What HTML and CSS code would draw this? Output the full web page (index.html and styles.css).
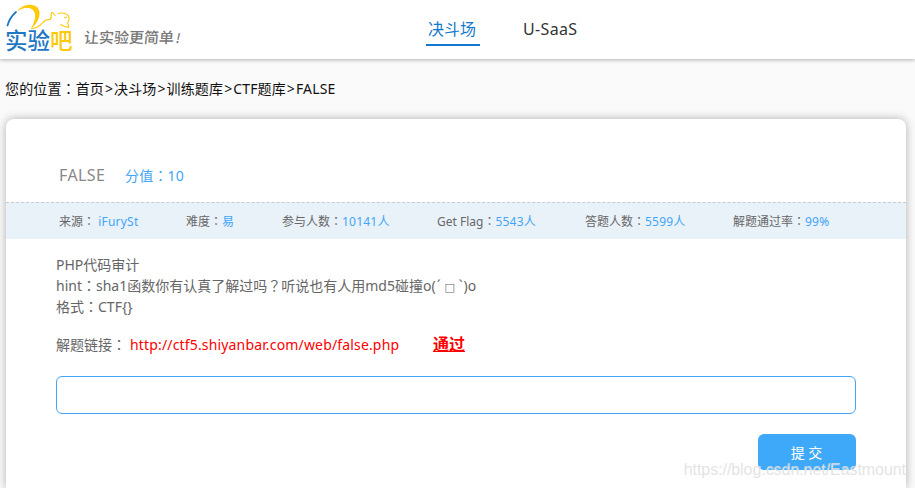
FILE: index.html
```html
<!DOCTYPE html>
<html lang="zh-CN">
<head>
<meta charset="utf-8">
<title>FALSE - 实验吧</title>
<link rel="stylesheet" href="styles.css">
</head>
<body>
<header class="topbar">
  <div class="brand">
    <svg class="arc" viewBox="0 0 72 30" width="72" height="30">
      <path d="M7.500 25.500C9 20 12 15.500 16 12" fill="none" stroke="#1f78c4" stroke-width="1.800" stroke-linecap="round"/>
      <path d="M31 28.500C41 29 42 20 48 19.500C53 20 50 15 52 12" fill="none" stroke="#ffc907" stroke-width="1.200"/>
      <path d="M17 11.500C22 4 33 2.500 38 8C42 14 38 23 31 29C35 21 37 14 33 10C29 6.500 23 7 17 11.500Z" fill="#ffc907"/>
      <path d="M52 12L55.500 16M58 13.500C64 12 70 14 69 20L67.500 23L69 27C65 28 63 25 60 24.500M64 18L67 17" fill="none" stroke="#ffc907" stroke-width="1.100"/>
    </svg>
    <div class="logo-name">实验<b>吧</b></div>
  </div>
  <div class="slogan"><span>让实验更简单</span><span class="bang">!</span></div>
  <nav class="nav">
    <a class="tab active">决斗场</a>
    <a class="tab saas">U-SaaS</a>
  </nav>
</header>
<div class="crumbs">您的位置<i>：</i>首页<s>&gt;</s>决斗场<s>&gt;</s>训练题库<s>&gt;</s>CTF题库<s>&gt;</s>FALSE</div>
<main class="card">
  <div class="heading"><h1>FALSE</h1><span class="score">分值<i>：</i>10</span></div>
  <div class="stats">
    <span>来源<i>：</i> <em>iFurySt</em></span>
    <span>难度<i>：</i><em>易</em></span>
    <span>参与人数<i>：</i><em>10141人</em></span>
    <span>Get Flag<i>：</i><em>5543人</em></span>
    <span>答题人数<i>：</i><em>5599人</em></span>
    <span>解题通过率<i>：</i><em>99%</em></span>
  </div>
  <div class="body">
    <p>PHP代码审计</p>
    <p>hint<i>：</i>sha1函数你有认真了解过吗<i>？</i>听说也有人用md5碰撞o(<span class="arm">ˊ</span><span class="mouth">□</span><span class="arm">ˋ</span>)o</p>
    <p>格式<i>：</i>CTF{}</p>
    <div class="linkrow"><span class="label">解题链接<i>：</i></span><a class="url">http://ctf5.shiyanbar.com/web/false.php</a><a class="pass">通过</a></div>
    <input class="answer" type="text">
    <div class="actions"><button class="submit">提 交</button></div>
  </div>
</main>
<div class="watermark">https://blog.csdn.net/Eastmount</div>
</body>
</html>
```
FILE: styles.css
```css
* { box-sizing: border-box; }
html { overflow: hidden; }
body {
  margin: 0;
  height: 488px;
  overflow: hidden;
  background: #fafafa;
  color: #111;
  font: 14px/21px "Noto Sans", "Noto Sans CJK SC", sans-serif;
}
i { font-style: normal; font-family: "Noto Sans CJK TC", sans-serif; line-height: 1; -webkit-locale: "zh-TW"; }
em { font-style: normal; color: #42a5f5; letter-spacing: .22px; }
s { display: inline-block; padding: 0 1px; text-decoration: none; }
p, h1 { margin: 0; font-weight: 400; }

.topbar {
  display: flex;
  height: 59px;
  background: #fff;
  box-shadow: 0 1px 4px rgba(0, 0, 0, .3);
}
.brand { width: 84px; flex: none; }
.arc { display: block; }
.logo-name {
  margin: -6px 0 0 5px;
  color: #1f78c4;
  font: 500 22.500px/30px "Noto Sans CJK SC", sans-serif;
  white-space: nowrap;
}
.logo-name b { color: #ffc907; font-weight: 500; }
.slogan {
  width: 342px;
  flex: none;
  padding-top: 25px;
  color: #777;
  font: 500 15px/24px "Noto Sans CJK SC", sans-serif;
}
.slogan span { display: inline-block; transform: skewX(-5deg); }
.slogan .bang { margin-left: 2px; font-size: 13px; transform: skewX(-12deg); }
.nav { display: flex; gap: 43px; padding-top: 16px; }
.tab { height: 30px; font-size: 16px; line-height: 26px; color: #333; white-space: nowrap; }
.tab.saas { letter-spacing: .35px; }
.tab.active { width: 54px; padding-left: 2px; color: #1479cb; border-bottom: 2px solid #1479cb; }

.crumbs { padding: 19px 0 0 5px; height: 60px; white-space: nowrap; letter-spacing: .13px; }

.card {
  width: 900px;
  height: 369px;
  margin-left: 6px;
  background: #fff;
  border-radius: 8px 8px 0 0;
  box-shadow: 0 0 10px rgba(0, 0, 0, .3);
  color: #666;
}
.heading { display: flex; height: 83px; padding: 45px 0 0 53px; line-height: 22px; }
.heading h1 { width: 66px; font-size: 16px; line-height: 22px; color: #888; letter-spacing: .4px; }
.score { color: #42a5f5; letter-spacing: .2px; line-height: 24px; }
.stats {
  display: grid;
  grid-template-columns: 127px 96px 155px 148px 148px 1fr;
  height: 37px;
  padding-left: 53px;
  border-top: 1px dashed #c5cbd0;
  background: #eaf2f9;
  font-size: 12px;
  line-height: 38px;
  white-space: nowrap;
}
.body { padding: 15px 50px 0; white-space: nowrap; }
.arm { display: inline-block; width: 6px; text-align: center; font-family: "Noto Sans", sans-serif; }
.mouth { display: inline-block; width: 16px; font-family: "DejaVu Sans", sans-serif; font-size: 11px; line-height: 11px; text-align: center; }
.linkrow { display: flex; height: 59px; padding-top: 17px; }
.label { width: 74px; }
.url { width: 303px; color: #f00; letter-spacing: .16px; }
.pass { color: #f00; font-size: 16px; font-weight: 700; text-decoration: underline; }
.answer {
  display: block;
  width: 800px;
  height: 38px;
  border: 1px solid #42a5f5;
  border-radius: 6px;
  background: #fff;
}
.actions { display: flex; justify-content: flex-end; padding-top: 20px; }
.submit {
  width: 98px;
  height: 36px;
  padding: 0 1px 1px 0;
  border: 0;
  border-radius: 6px;
  background: #3fa9f9;
  color: #fff;
  font: 14px "Noto Sans", "Noto Sans CJK SC", sans-serif;
}
.watermark {
  position: absolute;
  right: 9px;
  bottom: 8px;
  color: rgba(222, 222, 222, .85);
  font: 16px/20px "Liberation Sans", sans-serif;
  letter-spacing: -.06px;
  text-shadow: 0 1px 1px rgba(255, 255, 255, .6);
}
```
